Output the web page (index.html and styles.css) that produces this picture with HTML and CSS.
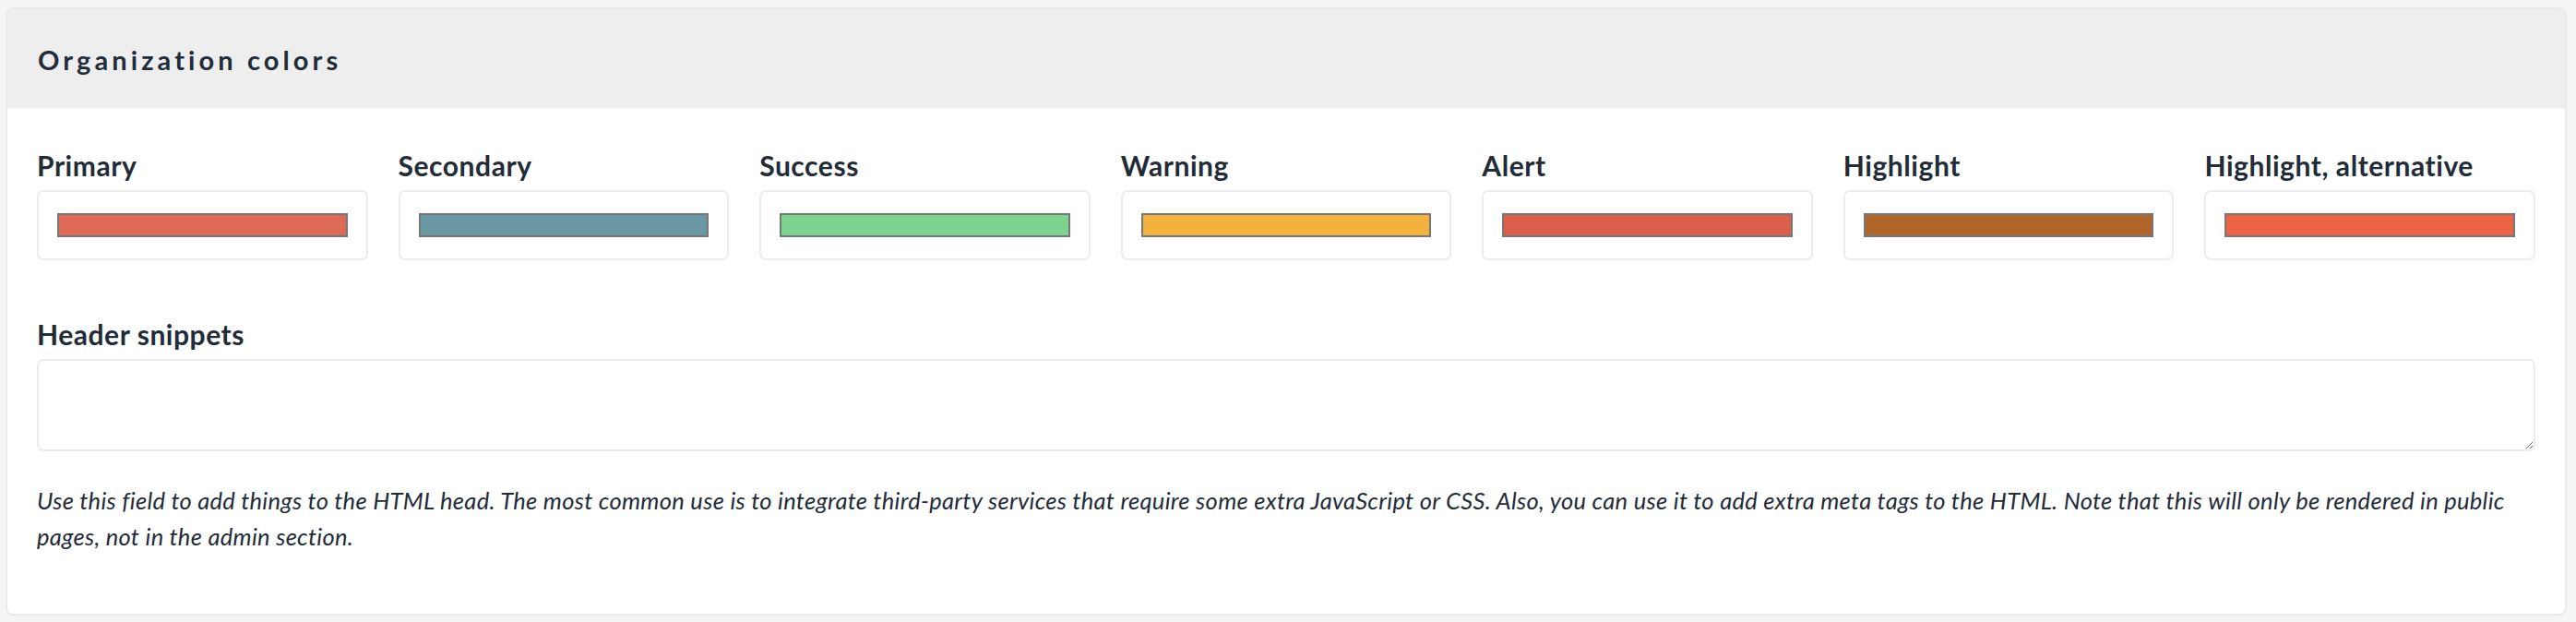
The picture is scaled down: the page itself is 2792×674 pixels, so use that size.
FILE: index.html
```
<!DOCTYPE html>
<html>
<head>
<meta charset="utf-8">
<link rel="stylesheet" href="styles.css">
</head>
<body>
<div class="card">
  <div class="card-header">
    <h2 class="card-title">Organization colors</h2>
  </div>
  <div class="card-body">
    <div class="colors">
      <div class="field">
        <label class="label">Primary</label>
        <div class="color-box"><div class="swatch" style="background:#df6957"></div></div>
      </div>
      <div class="field">
        <label class="label">Secondary</label>
        <div class="color-box"><div class="swatch" style="background:#6998a2"></div></div>
      </div>
      <div class="field">
        <label class="label">Success</label>
        <div class="color-box"><div class="swatch" style="background:#7bd38e"></div></div>
      </div>
      <div class="field">
        <label class="label">Warning</label>
        <div class="color-box"><div class="swatch" style="background:#f3b13d"></div></div>
      </div>
      <div class="field">
        <label class="label">Alert</label>
        <div class="color-box"><div class="swatch" style="background:#dc5f4c"></div></div>
      </div>
      <div class="field">
        <label class="label">Highlight</label>
        <div class="color-box"><div class="swatch" style="background:#b0652a"></div></div>
      </div>
      <div class="field">
        <label class="label">Highlight, alternative</label>
        <div class="color-box"><div class="swatch" style="background:#ec6343"></div></div>
      </div>
    </div>
    <div class="snippets">
      <label class="label">Header snippets</label>
      <textarea class="textarea"></textarea>
      <p class="help">Use this field to add things to the HTML head. The most common use is to integrate third-party services that require some extra JavaScript or CSS. Also, you can use it to add extra meta tags to the HTML. Note that this will only be rendered in public pages, not in the admin section.</p>
    </div>
  </div>
</div>
</body>
</html>
```
FILE: styles.css
```
* { box-sizing: border-box; }
html, body { margin: 0; padding: 0; }
body {
  background: #f5f5f5;
  font-family: Lato, "Liberation Sans", sans-serif;
  color: #222b38;
  padding: 8px 10px 9px 6px;
}
.card {
  border: 2px solid #ebebeb;
  border-radius: 8px;
  background: #fff;
  overflow: hidden;
}
.card-header {
  background: #eeeeee;
  height: 107px;
  display: flex;
  align-items: center;
  padding: 0 0 0 33px;
}
.card-title {
  margin: 0;
  font-size: 29px;
  font-weight: 700;
  letter-spacing: 4.1px;
  line-height: 1.2;
  position: relative;
  top: 2px;
}
.card-body {
  padding: 44px 32px 64px 32px;
}
.colors {
  display: grid;
  grid-template-columns: repeat(7, 1fr);
  column-gap: 33px;
}
.field { display: flex; flex-direction: column; }
.label {
  display: block;
  font-size: 30px;
  font-weight: 700;
  letter-spacing: 0.55px;
  line-height: 34px;
  position: relative;
  top: 1px;
}
.color-box {
  margin-top: 11px;
  height: 76px;
  border: 2px solid #ececec;
  border-radius: 7px;
  padding: 23px 20px;
}
.swatch {
  height: 26px;
  border: 2px solid #777;
}
.snippets { margin-top: 62px; }
.textarea {
  display: block;
  margin-top: 11px;
  width: 100%;
  height: 100px;
  border: 2px solid #ececec;
  border-radius: 7px;
  background: #fff;
  outline: none;
  font-family: inherit;
}
.help {
  margin: 34px 0 0 0;
  font-size: 25.5px;
  letter-spacing: 0.3px;
  font-style: italic;
  line-height: 39px;
}
```
